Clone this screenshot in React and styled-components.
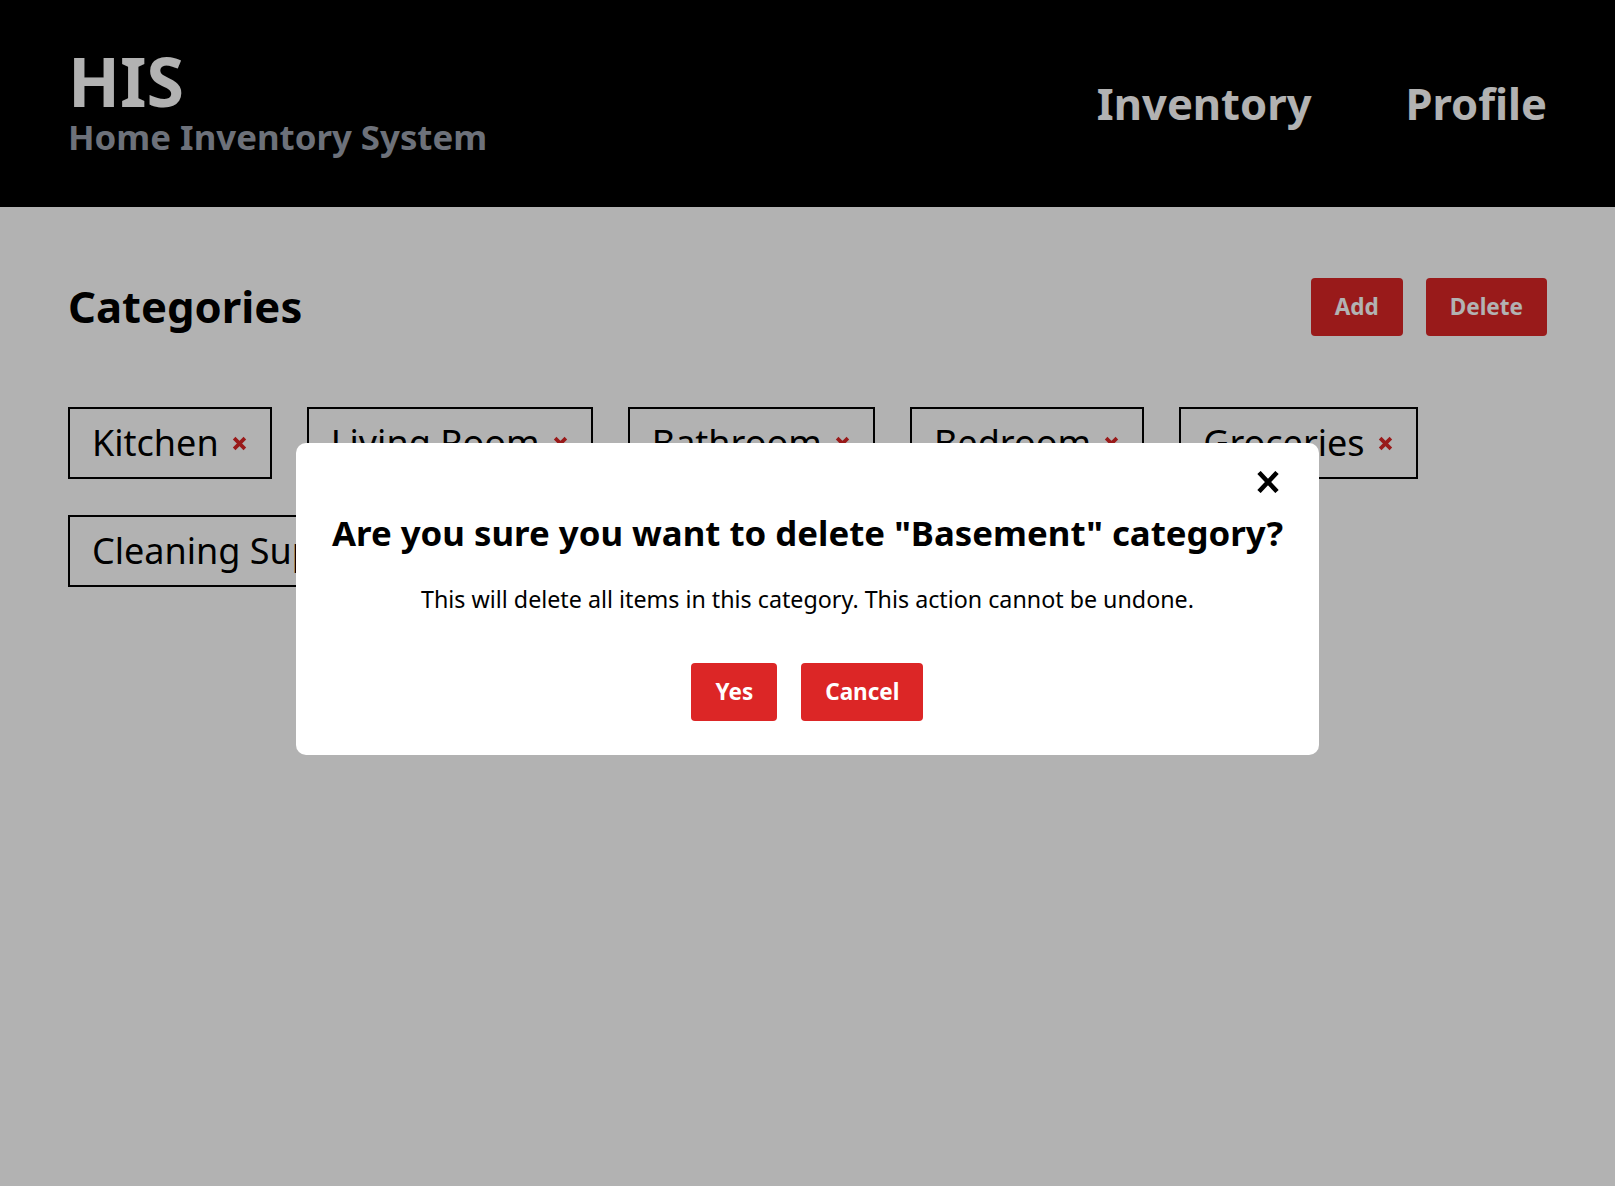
import React from 'react'
import styled, { createGlobalStyle } from 'styled-components'

const categories = ['Kitchen', 'Living Room', 'Bathroom', 'Bedroom', 'Groceries', 'Cleaning Supplies']

export default function App() {
  return (
    <>
      <GlobalStyle />
      <Header>
        <Brand>
          <BrandTitle>HIS</BrandTitle>
          <BrandSub>Home Inventory System</BrandSub>
        </Brand>
        <Nav>
          <NavLink href="#">Inventory</NavLink>
          <NavLink href="#">Profile</NavLink>
        </Nav>
      </Header>
      <Main>
        <TitleRow>
          <Title>Categories</Title>
          <Actions>
            <Button>Add</Button>
            <Button>Delete</Button>
          </Actions>
        </TitleRow>
        <ChipList>
          {categories.map((name) => (
            <Chip key={name}>
              {name}
              <RemoveIcon viewBox="0 0 14 14">
                <path d="M2 2 L12 12 M12 2 L2 12" />
              </RemoveIcon>
            </Chip>
          ))}
        </ChipList>
      </Main>

      <Overlay>
        <Modal>
          <CloseRow>
            <CloseButton aria-label="Close">
              <svg width="24" height="22" viewBox="0 0 24 22">
                <path d="M3 1.5 L21 20.5 M21 1.5 L3 20.5" stroke="#000" strokeWidth="4.6" />
              </svg>
            </CloseButton>
          </CloseRow>
          <ModalTitle>Are you sure you want to delete "Basement" category?</ModalTitle>
          <ModalText>This will delete all items in this category. This action cannot be undone.</ModalText>
          <ModalActions>
            <Button>Yes</Button>
            <Button>Cancel</Button>
          </ModalActions>
        </Modal>
      </Overlay>
    </>
  )
}

const GlobalStyle = createGlobalStyle`
  body {
    margin: 0;
    background: #fff;
    font-family: "Noto Sans", "Open Sans", sans-serif;
    color: #000;
  }
`

const Header = styled.header`
  height: 207px;
  box-sizing: border-box;
  background: #000;
  padding: 0 68px;
  display: flex;
  align-items: center;
  justify-content: space-between;
`

const Brand = styled.div`
  display: flex;
  flex-direction: column;
  gap: 5px;
  margin-bottom: 5px;
`

const BrandTitle = styled.h1`
  margin: 0;
  font-size: 68px;
  line-height: 1;
  font-weight: 700;
  color: #fff;
`

const BrandSub = styled.span`
  font-size: 34.8px;
  line-height: 1;
  font-weight: 700;
  color: #9ca3af;
`

const Nav = styled.nav`
  display: flex;
  gap: 94px;
`

const NavLink = styled.a`
  font-size: 43.5px;
  line-height: 1;
  font-weight: 700;
  color: #fff;
  text-decoration: none;
`

const Main = styled.main`
  padding: 71px 68px 0;
`

const TitleRow = styled.div`
  display: flex;
  align-items: center;
  justify-content: space-between;
`

const Title = styled.h2`
  margin: 0;
  font-size: 43.6px;
  line-height: 1;
  font-weight: 700;
`

const Actions = styled.div`
  display: flex;
  gap: 23px;
`

const Button = styled.button`
  font-family: inherit;
  font-size: 22.5px;
  line-height: 34px;
  font-weight: 700;
  color: #fff;
  background: #dc2626;
  border: none;
  border-radius: 4px;
  padding: 12px 24px;
  cursor: pointer;
`

const ChipList = styled.div`
  margin-top: 71px;
  display: flex;
  flex-wrap: wrap;
  gap: 36px 35px;
`

const Chip = styled.div`
  display: inline-flex;
  align-items: center;
  gap: 13px;
  border: 2px solid #000;
  padding: 9px 23px 9px 22px;
  font-size: 36px;
  line-height: 50px;
`

const RemoveIcon = styled.svg`
  width: 15px;
  height: 15px;
  stroke: #dc2626;
  stroke-width: 3.4;
  fill: none;
`

const Overlay = styled.div`
  position: fixed;
  inset: 0;
  background: rgba(0, 0, 0, 0.3);
  display: flex;
  align-items: center;
  justify-content: center;
  padding-top: 11px;
`

const Modal = styled.div`
  background: #fff;
  border-radius: 10px;
  padding: 27px 36px 34px;
  display: flex;
  flex-direction: column;
  align-items: center;
  text-align: center;
`

const CloseRow = styled.div`
  align-self: stretch;
  display: flex;
  justify-content: flex-end;
  padding-right: 3px;
`

const CloseButton = styled.button`
  background: none;
  border: none;
  padding: 0;
  height: 24px;
  display: flex;
  align-items: center;
  cursor: pointer;
`

const ModalTitle = styled.h3`
  margin: 18px 0 0;
  font-size: 34.8px;
  line-height: 42px;
  font-weight: 700;
`

const ModalText = styled.p`
  margin: 28px 0 0;
  font-size: 23.25px;
  line-height: 34px;
`

const ModalActions = styled.div`
  margin-top: 47px;
  display: flex;
  gap: 24px;
`
